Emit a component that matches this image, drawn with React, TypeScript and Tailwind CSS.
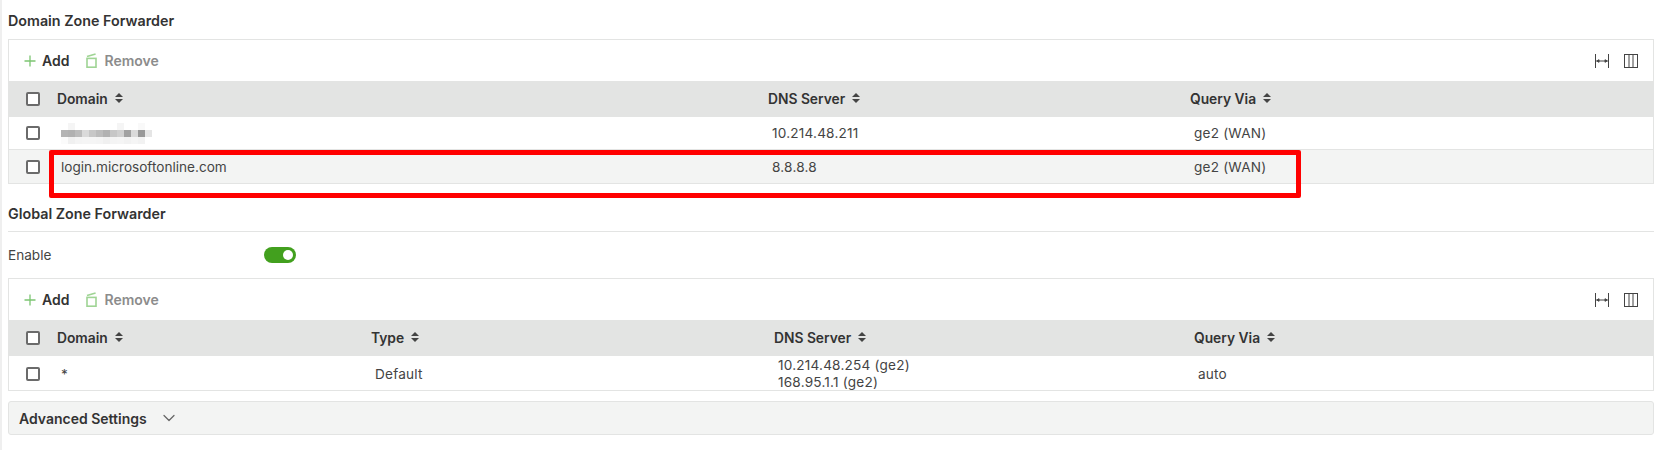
import { ChevronDown } from "lucide-react"

const SortIcon = () => (
  <svg width="8" height="10" viewBox="0 0 8 10" className="ml-[7px] -mt-[3px] text-[#444]" fill="currentColor">
    <path d="M4 0 8 4H0Z" />
    <path d="M4 10 0 6H8Z" />
  </svg>
)

const Checkbox = () => <div className="w-[14px] h-[14px] rounded-[2px] border-2 border-[#6b6b6b] bg-white" />

const Toolbar = () => (
  <div className="h-[41px] flex items-center justify-between px-[15px]">
    <div className="flex items-center">
      <svg width="12" height="12" viewBox="0 0 12 12" className="text-[#7cc572]" stroke="currentColor" strokeWidth="1.3">
        <path d="M6 0.5V11.5M0.5 6H11.5" />
      </svg>
      <span className="ml-[6px] text-[14px] font-semibold text-[#333]">Add</span>
      <svg width="11" height="15" viewBox="0 0 11 15" className="ml-[17px] text-[#9fd494]" fill="none" stroke="currentColor" strokeWidth="1.6">
        <path d="M1 3.6 9.6 0.9" />
        <rect x="1" y="5.4" width="9" height="8.8" />
      </svg>
      <span className="ml-[7px] text-[14px] font-semibold text-[#8c8c8c]">Remove</span>
    </div>
    <div className="flex items-center gap-[15px] text-[#444]">
      <svg width="14" height="14" viewBox="0 0 14 14" fill="none" stroke="currentColor" strokeWidth="1">
        <path d="M0.5 0V14M13.5 0V14M1 7H13" />
        <path d="M2 7 4 5.7V8.3ZM12 7 10 5.7V8.3Z" fill="currentColor" />
      </svg>
      <svg width="14" height="14" viewBox="0 0 14 14" fill="none" stroke="currentColor" strokeWidth="1">
        <rect x="0.5" y="0.5" width="13" height="13" />
        <path d="M5 0.5V13.5M9 0.5V13.5" />
      </svg>
    </div>
  </div>
)

const HeaderCell = ({ label }: { label: string }) => (
  <div className="flex items-center text-[13.8px] font-semibold text-[#333]">
    {label}
    <SortIcon />
  </div>
)

// pixelated domain name from the screenshot
const mosaic = [
  [0, 0.05, 0, 0, 0, 0, 0, 0, 0.05, 0, 0, 0.03, 0],
  [0.4, 0.42, 0.36, 0.2, 0.3, 0.36, 0.42, 0.3, 0.25, 0.5, 0.2, 0.55, 0.14],
  [0.02, 0.08, 0.06, 0.05, 0.05, 0.06, 0.08, 0.06, 0.05, 0.07, 0.05, 0.07, 0],
]

const Blurred = () => (
  <svg width="91" height="21" viewBox="0 0 91 21" className="block">
    {mosaic.map((row, y) =>
      row.map((o, x) => <rect key={`${x}-${y}`} x={x * 7} y={y * 7} width="7" height="7" fill="#444" opacity={o} />)
    )}
  </svg>
)

const Td = ({ children }: { children: React.ReactNode }) => (
  <div className="pl-[4px] pt-[1px] text-[13.6px] tracking-[0.2px] text-[#444]">{children}</div>
)

const App = () => {
  return (
    <div className="relative w-[1661px] h-[450px] overflow-hidden bg-white border-l-2 border-[#efefef] pl-[6px] pr-[7px] font-['Inter',sans-serif]">
      <div className="h-[39px] flex items-center pt-[3px] text-[14.3px] font-semibold text-[#333]">Domain Zone Forwarder</div>

      <div className="border border-[#e3e4e3]">
        <Toolbar />
        <div className="grid grid-cols-[31px_711px_422px_1fr] items-center h-[36px] bg-[#e3e4e3] pl-[17px]">
          <Checkbox />
          <HeaderCell label="Domain" />
          <HeaderCell label="DNS Server" />
          <HeaderCell label="Query Via" />
        </div>
        <div className="grid grid-cols-[31px_711px_422px_1fr] items-center h-[33px] pl-[17px] border-b border-[#e3e4e3]">
          <Checkbox />
          <Td><Blurred /></Td>
          <Td>10.214.48.211</Td>
          <Td>ge2 (WAN)</Td>
        </div>
        <div className="grid grid-cols-[31px_711px_422px_1fr] items-center h-[33px] pl-[17px] bg-[#f3f4f3]">
          <Checkbox />
          <div className="pl-[4px] pt-[1px] text-[13.6px] text-[#444]">login.microsoftonline.com</div>
          <Td>8.8.8.8</Td>
          <Td>ge2 (WAN)</Td>
        </div>
      </div>

      <div className="mt-[18px] h-[30px] flex items-center border-b border-[#e3e4e3] pb-[6px] text-[14.3px] font-semibold text-[#333]">Global Zone Forwarder</div>

      <div className="h-[46px] flex items-center">
        <span className="w-[256px] pt-[1px] text-[13.6px] text-[#444]">Enable</span>
        <div className="w-[32px] h-[16px] rounded-full bg-[#42a01e] flex items-center justify-end pr-[3px]">
          <div className="w-[10px] h-[10px] rounded-full bg-white" />
        </div>
      </div>

      <div className="border border-[#e3e4e3]">
        <Toolbar />
        <div className="grid grid-cols-[31px_314px_403px_420px_1fr] items-center h-[36px] bg-[#e3e4e3] pl-[17px]">
          <Checkbox />
          <HeaderCell label="Domain" />
          <HeaderCell label="Type" />
          <HeaderCell label="DNS Server" />
          <HeaderCell label="Query Via" />
        </div>
        <div className="grid grid-cols-[31px_314px_403px_420px_1fr] items-center h-[34px] pl-[17px]">
          <Checkbox />
          <Td>*</Td>
          <Td>Default</Td>
          <Td>
            <div className="leading-[17px]">10.214.48.254 (ge2)</div>
            <div className="leading-[17px]">168.95.1.1 (ge2)</div>
          </Td>
          <Td>auto</Td>
        </div>
      </div>

      <div className="mt-[10px] h-[34px] flex items-center pl-[10px] bg-[#f3f4f3] border border-[#e3e4e3] rounded-[3px]">
        <span className="text-[14px] font-semibold text-[#333]">Advanced Settings</span>
        <ChevronDown strokeWidth={1.5} className="ml-[12px] w-[20px] h-[20px] text-[#666]" />
      </div>

      {/* red annotation drawn over the second row */}
      <div className="absolute left-[47px] top-[150px] w-[1252px] h-[48px] border-[5px] border-[#ff0000] rounded-[2px]" />
    </div>
  )
}

export default App
